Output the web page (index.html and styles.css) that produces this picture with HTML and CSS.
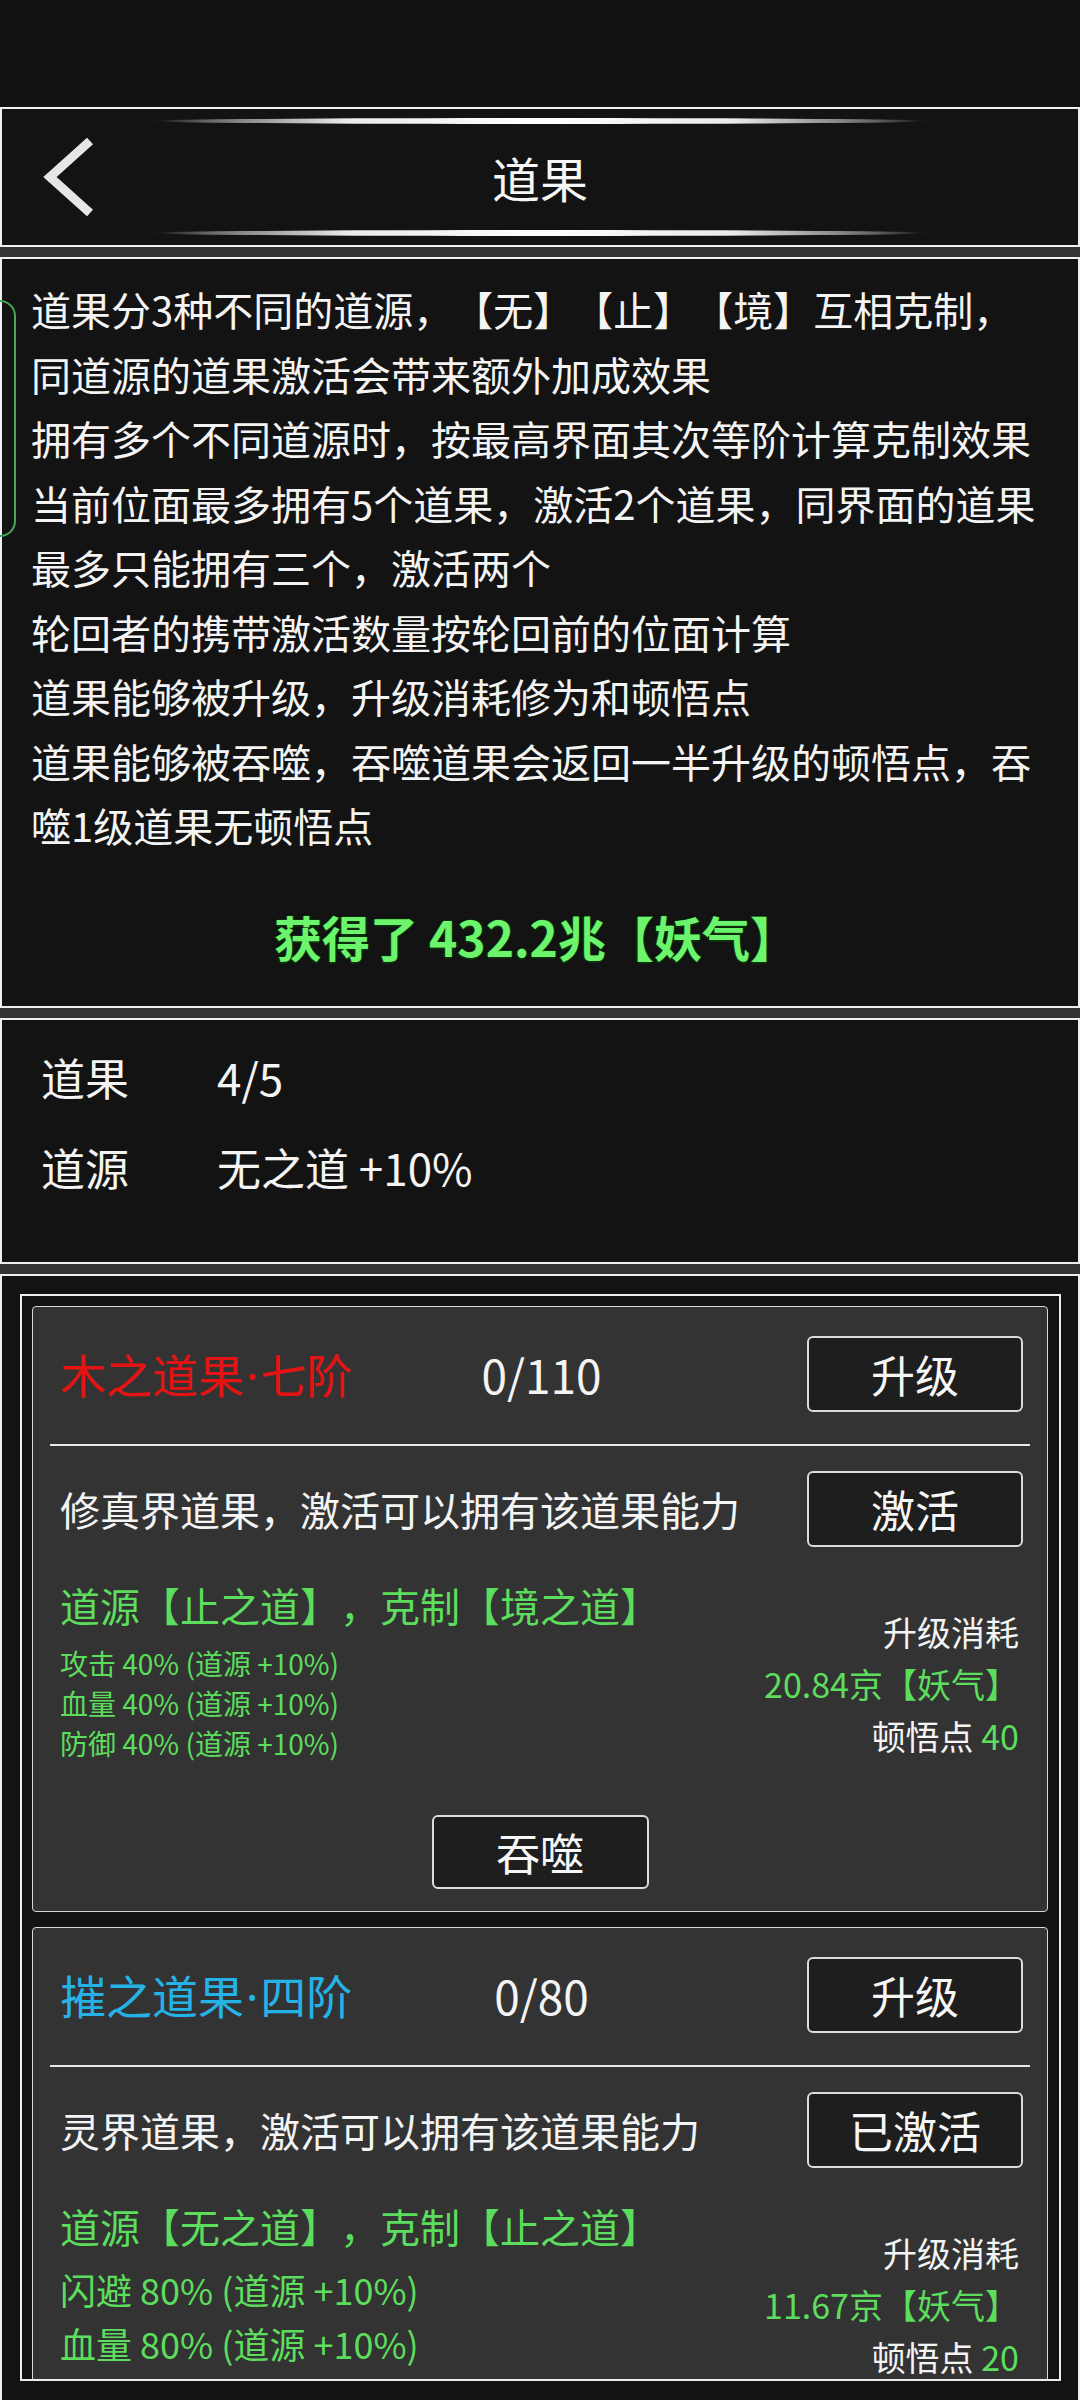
FILE: index.html
```html
<!DOCTYPE html>
<html lang="zh-CN">
<head>
<meta charset="utf-8">
<title>道果</title>
<link rel="stylesheet" href="styles.css">
</head>
<body>
<div class="page">
  <div class="status"></div>

  <header class="panel header">
    <div class="glow"></div>
    <div class="title-row">
      <div class="back">
        <svg width="60" height="80" viewBox="0 0 60 80"><polyline points="50,4 10,40 50,76" fill="none" stroke="#e6e6e6" stroke-width="9" stroke-linejoin="miter"/></svg>
      </div>
      <h1 class="title">道果</h1>
      <div></div>
    </div>
    <div class="glow"></div>
  </header>

  <section class="panel intro">
    <div class="bracket"></div>
    <div class="intro-text">道果分3种不同的道源，【无】【止】【境】互相克制，<br>同道源的道果激活会带来额外加成效果<br>拥有多个不同道源时，按最高界面其次等阶计算克制效果<br>当前位面最多拥有5个道果，激活2个道果，同界面的道果最多只能拥有三个，激活两个<br>轮回者的携带激活数量按轮回前的位面计算<br>道果能够被升级，升级消耗修为和顿悟点<br>道果能够被吞噬，吞噬道果会返回一半升级的顿悟点，吞噬1级道果无顿悟点</div>
    <div class="gain">获得了 432.2兆【妖气】</div>
  </section>

  <section class="panel summary">
    <div class="sum-row"><span>道果</span><span>4/5</span></div>
    <div class="sum-row"><span>道源</span><span>无之道 +10%</span></div>
  </section>

  <section class="panel list">
    <div class="frame">
      <div class="card">
        <div class="row top-row">
          <span class="name red">木之道果<span class="dot">·</span>七阶</span>
          <span class="count">0/110</span>
          <button class="btn">升级</button>
        </div>
        <div class="divider"></div>
        <div class="row desc-row">
          <span class="desc">修真界道果，激活可以拥有该道果能力</span>
          <button class="btn">激活</button>
        </div>
        <div class="details">
          <div class="left">
            <div class="source">道源【止之道】，克制【境之道】</div>
            <div class="stats small">
              <div>攻击 40% (道源 +10%)</div>
              <div>血量 40% (道源 +10%)</div>
              <div>防御 40% (道源 +10%)</div>
            </div>
          </div>
          <div class="cost">
            <div>升级消耗</div>
            <div class="green">20.84京【妖气】</div>
            <div>顿悟点 <span class="green">40</span></div>
          </div>
        </div>
        <div class="devour-row"><button class="btn">吞噬</button></div>
      </div>

      <div class="card">
        <div class="row top-row">
          <span class="name blue">摧之道果<span class="dot">·</span>四阶</span>
          <span class="count">0/80</span>
          <button class="btn">升级</button>
        </div>
        <div class="divider"></div>
        <div class="row desc-row">
          <span class="desc">灵界道果，激活可以拥有该道果能力</span>
          <button class="btn">已激活</button>
        </div>
        <div class="details">
          <div class="left">
            <div class="source">道源【无之道】，克制【止之道】</div>
            <div class="stats large">
              <div>闪避 80% (道源 +10%)</div>
              <div>血量 80% (道源 +10%)</div>
            </div>
          </div>
          <div class="cost">
            <div>升级消耗</div>
            <div class="green">11.67京【妖气】</div>
            <div>顿悟点 <span class="green">20</span></div>
          </div>
        </div>
        <div class="devour-row"><button class="btn">吞噬</button></div>
      </div>
    </div>
  </section>
</div>
</body>
</html>
```

FILE: styles.css
```css
* { box-sizing: border-box; }

html, body {
  margin: 0;
  padding: 0;
  background: #333333;
}

body {
  width: 1080px;
  height: 2400px;
  overflow: hidden;
  font-family: "Noto Sans CJK SC", "Noto Sans", sans-serif;
  color: #f4f4f4;
  text-spacing-trim: space-all;
}

.page {
  display: flex;
  flex-direction: column;
  gap: 10px;
}

.status {
  height: 107px;
  background: #121212;
  margin-bottom: -10px;
}

.panel {
  background: #131313;
  border: 2px solid #f0f0f0;
}

/* header */
.header {
  height: 140px;
  display: flex;
  flex-direction: column;
  align-items: center;
  padding: 9px 0 9px;
}

.glow {
  width: 776px;
  height: 6px;
  border-radius: 50%;
  background: linear-gradient(90deg, rgba(255,255,255,0) 0%, rgba(200,200,200,0.5) 8%, rgba(245,245,245,0.95) 25%, #ffffff 50%, rgba(245,245,245,0.95) 75%, rgba(200,200,200,0.5) 92%, rgba(255,255,255,0) 100%);
}

.title-row {
  flex: 1;
  width: 100%;
  display: grid;
  grid-template-columns: 1fr auto 1fr;
  align-items: center;
}

.back {
  padding-left: 38px;
  display: flex;
  align-items: center;
}

.back svg { display: block; }

.title {
  margin: 0;
  font-size: 48px;
  font-weight: 400;
  line-height: 1;
  color: #f6f6f6;
}

/* intro */
.intro {
  position: relative;
  height: 751px;
  padding: 18px 37px 0 29px;
}

.bracket {
  position: absolute;
  left: -18px;
  top: 41px;
  width: 32px;
  height: 237px;
  border: 2px solid #44a854;
  border-radius: 16px;
}

.intro-text {
  font-size: 40px;
  line-height: 64.5px;
}

.gain {
  margin-top: 46px;
  text-align: center;
  font-size: 48px;
  line-height: 64px;
  font-weight: 700;
  color: #6cf56c;
  text-shadow: 1.5px 0 0 #0c2e0c, -1.5px 0 0 #0c2e0c, 0 1.5px 0 #0c2e0c, 0 -1.5px 0 #0c2e0c, 1px 1px 1px #000, -1px -1px 1px #000;
}

/* summary */
.summary {
  height: 246px;
  padding: 12px 0 0 39px;
}

.sum-row {
  display: grid;
  grid-template-columns: 176px auto;
  font-size: 44px;
  line-height: 90px;
}

/* list */
.list {
  height: 1200px;
  padding: 18px 17px 0 18px;
}

.frame {
  height: 1087px;
  overflow: hidden;
  border: 2px solid #eeeeee;
  padding: 10px 11px 0 10px;
  display: flex;
  flex-direction: column;
  gap: 15px;
}

.card {
  flex: none;
  background: #333333;
  border: 1px solid #d8d8d8;
  border-radius: 4px;
  padding: 0 17px 22px;
}

.row {
  display: grid;
  align-items: center;
  height: 76px;
}

.top-row {
  margin-top: 29px;
  grid-template-columns: 1fr auto 1fr;
  padding: 0 7px 0 10px;
}

.desc-row {
  margin-top: 25px;
  grid-template-columns: 1fr auto;
  padding: 0 7px 0 10px;
}

.name {
  font-size: 46px;
  line-height: 1;
}

.dot {
  font-family: "Noto Sans", "DejaVu Sans", sans-serif;
  padding: 0 2px;
}

.red { color: #e41414; }
.blue { color: #25b2e6; }

.count {
  font-size: 46px;
  line-height: 1;
  color: #f4f4f4;
}

.btn {
  justify-self: end;
  width: 216px;
  height: 76px;
  background: #1e1e1e;
  border: 2px solid #dcdcdc;
  border-radius: 6px;
  color: #f6f6f6;
  font-family: "Noto Sans CJK SC", "Noto Sans", sans-serif;
  font-size: 44px;
  line-height: 1;
  padding: 0;
}

.divider {
  margin-top: 32px;
  height: 2px;
  background: #e8e8e8;
}

.desc {
  font-size: 40px;
  line-height: 1;
}

.details {
  margin-top: 28px;
  display: flex;
  justify-content: space-between;
  align-items: flex-start;
  padding: 0 11px 0 10px;
}

.source {
  font-size: 40px;
  line-height: 60px;
  color: #5ddd5d;
}

.stats { color: #5ddd5d; }

.stats.small {
  margin-top: 8px;
  font-size: 28px;
  line-height: 40px;
}

.stats.large {
  margin-top: 6px;
  font-size: 36px;
  line-height: 54px;
}

.cost {
  margin-top: 31px;
  text-align: right;
  font-size: 34px;
  line-height: 52px;
  color: #f4f4f4;
}

.green { color: #5ddd5d; }

.devour-row {
  margin-top: 52px;
  display: flex;
  justify-content: center;
}

.devour-row .btn {
  width: 217px;
  height: 74px;
}
```
